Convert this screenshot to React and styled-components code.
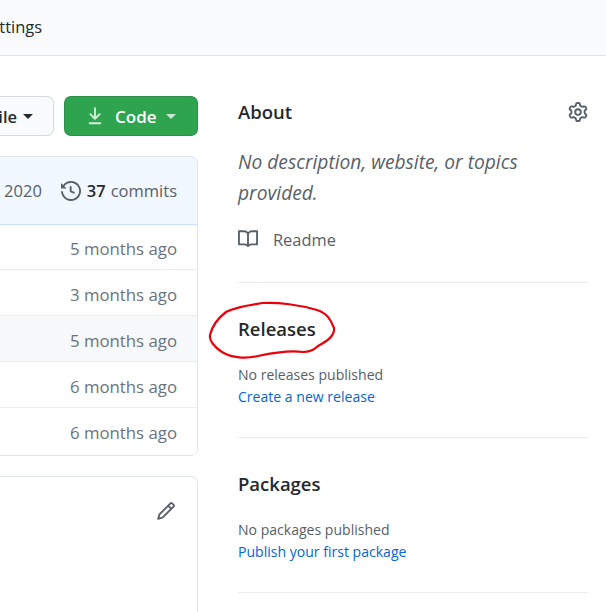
import React from "react";
import styled, { createGlobalStyle } from "styled-components";

const Global = createGlobalStyle`
  html, body { margin: 0; padding: 0; height: 612px; overflow: hidden; background: #fff; }
  body { font-family: "Open Sans", "Noto Sans", "Liberation Sans", sans-serif; color: #24292e; }
  #root { position: relative; width: 606px; height: 612px; overflow: hidden; }
`;

const TopBar = styled.header`
  height: 55px;
  background: #fafbfc;
  border-bottom: 1px solid #e1e4e8;
  display: flex;
  align-items: center;
  overflow: hidden;
`;
const TopTab = styled.span`
  font-size: 16.5px;
  margin-left: -19px;
  color: #24292e;
  position: relative;
  top: -1px;
`;
const Layout = styled.div`
  display: flex;
  gap: 40px;
  padding: 40px 18px 0 0;
`;
const MainCol = styled.main`
  flex: 0 0 198px;
  width: 198px;
  display: flex;
  flex-direction: column;
`;
const Toolbar = styled.div`
  display: flex;
  justify-content: flex-end;
  gap: 10px;
  height: 40px;
`;
const FileButton = styled.div`
  flex: 0 0 100px;
  margin-left: -40px;
  box-sizing: border-box;
  background: #fafbfc;
  border: 1px solid rgba(27, 31, 35, 0.15);
  border-radius: 7px;
  display: flex;
  align-items: center;
  justify-content: flex-end;
  gap: 6px;
  padding-right: 20px;
  font-size: 16.5px;
  font-weight: 600;
  white-space: nowrap;
`;
const CodeButton = styled.div`
  flex: 0 0 134px;
  box-sizing: border-box;
  background: #2ea44f;
  border: 1px solid rgba(27, 31, 35, 0.15);
  border-radius: 7px;
  color: #fff;
  display: flex;
  align-items: center;
  padding-left: 20px;
  font-size: 17px;
  font-weight: 600;
  svg { flex: none; }
`;
const CodeLabel = styled.span`
  margin-left: 10px;
`;
const Caret = styled.span`
  display: inline-block;
  width: 0;
  height: 0;
  margin-left: ${(p) => p.$gap || 0}px;
  border-style: solid;
  border-width: 5px 5px 0;
  border-color: ${(p) => p.$color} transparent transparent;
  opacity: ${(p) => p.$opacity || 1};
`;
const Card = styled.section`
  margin: ${(p) => p.$top}px 0 0 -40px;
  border: 1px solid #e1e4e8;
  border-radius: 7px;
  overflow: hidden;
  min-height: ${(p) => p.$minHeight || 0}px;
  box-sizing: border-box;
`;
const Commits = styled.div`
  height: 69px;
  margin: -1px -1px 0;
  box-sizing: border-box;
  background: #f1f8ff;
  border: 1px solid #c8e1ff;
  border-radius: 7px 7px 0 0;
  display: flex;
  align-items: center;
  justify-content: flex-end;
  padding-right: 20px;
  font-size: 16.5px;
  color: #586069;
  white-space: nowrap;
`;
const CommitDate = styled.span`
  margin-right: 19px;
`;
const Strong = styled.strong`
  font-weight: 600;
  color: #24292e;
  margin: 0 5px 0 6px;
`;
const Row = styled.div`
  height: 46px;
  box-sizing: border-box;
  display: flex;
  align-items: flex-start;
  justify-content: flex-end;
  padding: 13px 20px 0 0;
  font-size: 16.8px;
  line-height: 24px;
  color: #6a737d;
  background: ${(p) => (p.$active ? "#f6f8fa" : "#fff")};
  & + & { border-top: 1px solid #eaecef; }
  ${Commits} + & { height: 44px; padding-top: 12px; }
  &:last-child { height: 48px; }
`;
const ReadmeHead = styled.div`
  display: flex;
  justify-content: flex-end;
  padding: 24px 21px 0 0;
  color: #586069;
`;
const Sidebar = styled.aside`
  flex: 1;
  min-width: 0;
`;
const Section = styled.section`
  padding: 31px 0 29px;
  border-bottom: 1px solid #eaecef;
  &:first-child { padding: 1px 0 28px; }
`;
const HeadRow = styled.div`
  display: flex;
  justify-content: space-between;
  align-items: center;
  color: #586069;
`;
const Heading = styled.h2`
  margin: 0;
  font-size: 18.5px;
  line-height: 30px;
  font-weight: 600;
  color: #24292e;
`;
const Desc = styled.p`
  margin: 19px 0 0;
  font-size: 19.2px;
  line-height: 31px;
  font-style: italic;
  color: #586069;
`;
const Readme = styled.div`
  display: flex;
  align-items: center;
  gap: 15px;
  margin-top: 16px;
  height: 30px;
  font-size: 16.4px;
  color: #586069;
`;
const Muted = styled.div`
  margin-top: 20px;
  font-size: 14.05px;
  line-height: 22px;
  color: #586069;
`;
const Link = styled.a`
  display: block;
  font-size: 14.05px;
  line-height: 22px;
  color: #0366d6;
`;
const Scribble = styled.svg`
  position: absolute;
  left: 0;
  top: 0;
  pointer-events: none;
`;

const Icon = ({ size, color, d }) => (
  <svg width={size} height={size} viewBox="0 0 16 16" fill={color} style={{ flex: "none" }}>
    <path fillRule="evenodd" d={d} />
  </svg>
);

const history = "M1.643 3.143L.427 1.927A.25.25 0 000 2.104V5.75c0 .138.112.25.25.25h3.646a.25.25 0 00.177-.427L2.715 4.215a6.5 6.5 0 11-1.18 4.458.75.75 0 10-1.493.154 8.001 8.001 0 101.6-5.684zM7.75 4a.75.75 0 01.75.75v2.992l2.028.812a.75.75 0 01-.557 1.392l-2.5-1A.75.75 0 017 8.25v-3.5A.75.75 0 017.75 4z";
const gear = "M7.429 1.525a6.593 6.593 0 011.142 0c.036.003.108.036.137.146l.289 1.105c.147.56.55.967.997 1.189.174.086.341.183.501.29.417.278.97.423 1.53.27l1.102-.303c.11-.03.175.016.195.046.219.31.41.641.573.989.014.031.022.11-.059.19l-.815.806c-.411.406-.562.957-.53 1.456a4.588 4.588 0 010 .582c-.032.499.119 1.05.53 1.456l.815.806c.08.08.073.159.059.19a6.494 6.494 0 01-.573.99c-.02.029-.086.074-.195.045l-1.103-.303c-.559-.153-1.112-.008-1.529.27-.16.107-.327.204-.5.29-.449.222-.851.628-.998 1.189l-.289 1.105c-.029.11-.101.143-.137.146a6.613 6.613 0 01-1.142 0c-.036-.003-.108-.037-.137-.146l-.289-1.105c-.147-.56-.55-.967-.997-1.189a4.502 4.502 0 01-.501-.29c-.417-.278-.97-.423-1.53-.27l-1.102.303c-.11.03-.175-.016-.195-.046a6.492 6.492 0 01-.573-.989c-.014-.031-.022-.11.059-.19l.815-.806c.411-.406.562-.957.53-1.456a4.587 4.587 0 010-.582c.032-.499-.119-1.05-.53-1.456l-.815-.806c-.08-.08-.073-.159-.059-.19a6.44 6.44 0 01.573-.99c.02-.029.086-.075.195-.045l1.103.303c.559.153 1.112.008 1.529-.27.16-.107.327-.204.5-.29.449-.222.851-.628.998-1.189l.289-1.105c.029-.11.101-.143.137-.146zM8 0c-.236 0-.47.01-.701.03-.743.065-1.29.615-1.458 1.261l-.29 1.106c-.017.066-.078.158-.211.224a5.994 5.994 0 00-.668.386c-.123.082-.233.09-.3.071L3.27 2.776c-.644-.177-1.392.02-1.82.63a7.977 7.977 0 00-.704 1.217c-.315.675-.111 1.422.363 1.891l.815.806c.05.048.098.147.088.294a6.084 6.084 0 000 .772c.01.147-.038.246-.088.294l-.815.806c-.474.469-.678 1.216-.363 1.891.2.428.436.835.704 1.218.428.609 1.176.806 1.82.63l1.103-.303c.066-.019.176-.011.299.071.213.143.436.272.668.386.133.066.194.158.212.224l.289 1.106c.169.646.715 1.196 1.458 1.26a8.094 8.094 0 001.402 0c.743-.064 1.29-.614 1.458-1.26l.29-1.106c.017-.066.078-.158.211-.224a5.98 5.98 0 00.668-.386c.123-.082.233-.09.3-.071l1.102.302c.644.177 1.392-.02 1.82-.63.268-.382.505-.789.704-1.217.315-.675.111-1.422-.364-1.891l-.814-.806c-.05-.048-.098-.147-.088-.294a6.1 6.1 0 000-.772c-.01-.147.039-.246.088-.294l.814-.806c.475-.469.679-1.216.364-1.891a7.992 7.992 0 00-.704-1.218c-.428-.609-1.176-.806-1.82-.63l-1.103.303c-.066.019-.176.011-.299-.071a5.991 5.991 0 00-.668-.386c-.133-.066-.194-.158-.212-.224L10.16 1.29C9.99.645 9.444.095 8.701.031A8.094 8.094 0 008 0zm1.5 8a1.5 1.5 0 11-3 0 1.5 1.5 0 013 0zM11 8a3 3 0 11-6 0 3 3 0 016 0z";
const book = "M0 1.75A.75.75 0 01.75 1h4.253c1.227 0 2.317.59 3 1.501A3.744 3.744 0 0111.006 1h4.245a.75.75 0 01.75.75v10.5a.75.75 0 01-.75.75h-4.507a2.25 2.25 0 00-1.591.659l-.622.621a.75.75 0 01-1.06 0l-.622-.621A2.25 2.25 0 005.258 13H.75a.75.75 0 01-.75-.75V1.75zm8.755 3a2.25 2.25 0 012.25-2.25H14.5v9h-3.757c-.71 0-1.4.201-1.992.572l.004-7.322zm-1.504 7.324l.004-5.073-.002-2.253A2.25 2.25 0 005.003 2.5H1.5v9h3.757a3.75 3.75 0 011.994.574z";
const pencil = "M11.013 1.427a1.75 1.75 0 012.474 0l1.086 1.086a1.75 1.75 0 010 2.474l-8.61 8.61c-.21.21-.47.364-.756.445l-3.251.93a.75.75 0 01-.927-.928l.929-3.25a1.75 1.75 0 01.445-.758l8.61-8.61zm1.414 1.06a.25.25 0 00-.354 0L10.811 3.75l1.439 1.44 1.263-1.263a.25.25 0 000-.354l-1.086-1.086zM11.189 6.25L9.75 4.81l-6.286 6.287a.25.25 0 00-.064.108l-.558 1.953 1.953-.558a.249.249 0 00.108-.064l6.286-6.286z";
const download = "M7.47 10.78a.75.75 0 001.06 0l3.75-3.75a.75.75 0 00-1.06-1.06L8.75 8.44V1.75a.75.75 0 00-1.5 0v6.69L4.78 5.97a.75.75 0 00-1.06 1.06l3.75 3.75zM3.75 13a.75.75 0 000 1.5h8.5a.75.75 0 000-1.5h-8.5z";

const rows = ["5 months ago", "3 months ago", "5 months ago", "6 months ago", "6 months ago"];

export default function App() {
  return (
    <>
      <Global />
      <TopBar>
        <TopTab>Settings</TopTab>
      </TopBar>
      <Layout>
        <MainCol>
          <Toolbar>
            <FileButton>
              Add file
              <Caret $color="#24292e" />
            </FileButton>
            <CodeButton>
              <Icon size={20} color="rgba(255,255,255,0.8)" d={download} />
              <CodeLabel>Code</CodeLabel>
              <Caret $color="#fff" $gap={9} $opacity={0.75} />
            </CodeButton>
          </Toolbar>
          <Card $top={20}>
            <Commits>
              <CommitDate>2020</CommitDate>
              <Icon size={20} color="#586069" d={history} />
              <Strong>37</Strong>
              commits
            </Commits>
            {rows.map((r, i) => (
              <Row key={i} $active={i === 2}>
                {r}
              </Row>
            ))}
          </Card>
          <Card $top={20} $minHeight={200}>
            <ReadmeHead>
              <Icon size={20} color="#586069" d={pencil} />
            </ReadmeHead>
          </Card>
        </MainCol>
        <Sidebar>
          <Section>
            <HeadRow>
              <Heading>About</Heading>
              <Icon size={20} color="#586069" d={gear} />
            </HeadRow>
            <Desc>No description, website, or topics provided.</Desc>
            <Readme>
              <Icon size={20} color="#586069" d={book} />
              Readme
            </Readme>
          </Section>
          <Section>
            <Heading>Releases</Heading>
            <Muted>No releases published</Muted>
            <Link>Create a new release</Link>
          </Section>
          <Section>
            <Heading>Packages</Heading>
            <Muted>No packages published</Muted>
            <Link>Publish your first package</Link>
          </Section>
        </Sidebar>
      </Layout>
      <Scribble width="606" height="612" viewBox="0 0 606 612">
        <path
          d="M263 303 C278 302 300 305 317 310 C327 313 331 320 334 328 C335 336 327 341 318 346 C314 350 308 352 303 352 C290 350 272 353 258 356 C246 359 232 358 222 352 C214 347 209 340 210 335 C212 327 218 318 226 312 C238 306 250 305 263 303 Z"
          fill="none"
          stroke="#e8000b"
          strokeWidth="2.2"
        />
      </Scribble>
    </>
  );
}
